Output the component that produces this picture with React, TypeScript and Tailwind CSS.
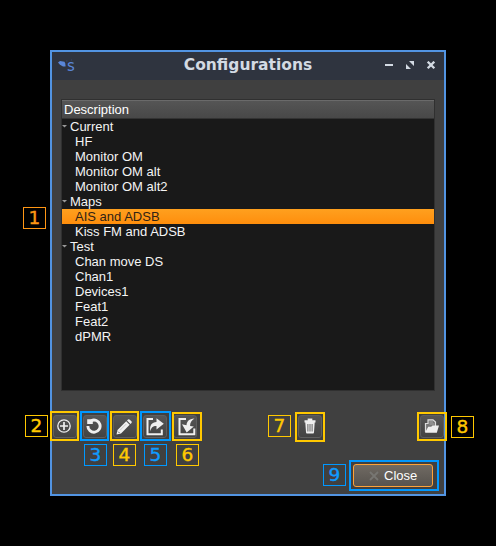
import type { ReactNode } from "react";

const groups = [
  { name: "Current", items: ["HF", "Monitor OM", "Monitor OM alt", "Monitor OM alt2"] },
  { name: "Maps", items: ["AIS and ADSB", "Kiss FM and ADSB"] },
  { name: "Test", items: ["Chan move DS", "Chan1", "Devices1", "Feat1", "Feat2", "dPMR"] },
];

const selected = "AIS and ADSB";

const tones = {
  orange: "border-[#ff9614] text-[#ff9614]",
  yellow: "border-[#ffc800] text-[#ffc800]",
  blue: "border-[#0098ff] text-[#0f9bff]",
};

type Tone = keyof typeof tones;

function Callout({ n, tone, place }: { n: number; tone: Tone; place: string }) {
  return (
    <span
      className={`absolute z-10 flex h-[22px] w-[23px] justify-center border font-['DejaVu_Sans',sans-serif] text-[18.5px] leading-[19px] [-webkit-text-stroke:0.4px] ${tones[tone]} ${place}`}
    >
      {n}
    </span>
  );
}

function ToolButton({
  label, n, tone, frame, place, children,
}: {
  label: string; n: number; tone: Tone; frame: string; place: string; children: ReactNode;
}) {
  return (
    <div className="relative h-[23px] w-6">
      <button
        aria-label={label}
        className="flex h-full w-full items-center justify-center rounded-[3px] border border-[#5f5f5f] bg-gradient-to-b from-[#565656] to-[#434343] text-[#efefef]"
      >
        {children}
      </button>
      <span className={`absolute border-2 ${tones[tone]} ${frame}`} />
      <Callout n={n} tone={tone} place={place} />
    </div>
  );
}

function TitleBar() {
  return (
    <header className="flex h-7 items-center bg-[#2f343f] pr-2 pl-1">
      <div className="flex w-16 items-center text-[#5a86d8]">
        <svg width="22" height="20" viewBox="0 0 22 20">
          <path d="M2 6.5L4 5L8.5 5.8L9.5 8V10.5L7 10.5L4 8.8Z" fill="currentColor" />
          <path d="M10 5h1.5M15 4h1M9 8h1" stroke="#35466e" />
          <text x="11" y="15" fontSize="15" fontFamily="DejaVu Sans, sans-serif" fill="currentColor">s</text>
        </svg>
      </div>
      <h1 className="flex-1 pr-2 pb-0.5 text-center font-['DejaVu_Sans',sans-serif] text-[15.5px] leading-[24px] font-bold text-[#d3dae3]">
        Configurations
      </h1>
      <div className="flex w-[52px] shrink-0 justify-between text-[#d3dae3]">
        <svg width="10" height="10" viewBox="0 0 10 10"><path d="M1 3h8v2H1z" fill="currentColor" /></svg>
        <svg width="10" height="10" viewBox="0 0 10 10"><path d="M4 0h5v5zM1 3v5h5z" fill="currentColor" /></svg>
        <svg width="10" height="10" viewBox="0 0 10 10"><path d="M1.7.7l6.6 6.6M8.3.7L1.7 7.3" stroke="currentColor" strokeWidth="2.3" /></svg>
      </div>
    </header>
  );
}

function Tree() {
  return (
    <div className="relative">
      <div className="h-[292px] border border-[#303030] bg-[#191919]">
        <div className="h-[19px] border-t border-b border-t-[#6a6a6a] border-b-[#333] bg-gradient-to-b from-[#555] to-[#484848] pl-0.5 text-[13px] leading-[18px] text-white">
          Description
        </div>
        {groups.map((g) => (
          <section key={g.name}>
            <div className="flex h-[15px] items-center text-[13px] leading-[15px]">
              <svg width="8" height="6" viewBox="0 0 8 6"><path d="M0 1h5L2.5 3.5z" fill="#999" /></svg>
              {g.name}
            </div>
            {g.items.map((item) => (
              <div
                key={item}
                className={`h-[15px] pl-[13px] text-[13px] leading-[15px] ${
                  item === selected ? "bg-gradient-to-b from-[#ffa01e] to-[#ff8e0b] text-[#302315]" : ""
                }`}
              >
                {item}
              </div>
            ))}
          </section>
        ))}
      </div>
      <Callout n={1} tone="orange" place="-left-[38px] top-[108px]" />
    </div>
  );
}

const below = "top-[29px]";

export default function App() {
  return (
    <main className="h-[546px] w-[496px] overflow-hidden bg-black p-[50px] font-['Liberation_Sans',Arial,sans-serif] text-[#f4f4f4]">
      <div className="h-[446px] w-[396px] border-2 border-[#5294e2] bg-[#404040]">
        <TitleBar />
        <div className="px-[9px] pt-[19px]">
          <Tree />
        </div>
        <div className="mt-6 flex pl-px">
          <div className="flex gap-1.5">
            <ToolButton label="New" n={2} tone="yellow" frame="-left-[3px] -top-1 h-[30px] w-[29px]" place="-left-7 top-0">
              <svg className="-mt-px -ml-0.5" width="16" height="16" viewBox="0 0 16 16" fill="none" stroke="currentColor">
                <circle cx="8" cy="8" r="6.2" strokeWidth="1.3" />
                <path d="M8 4v8M4 8h8" strokeWidth="1.7" />
              </svg>
            </ToolButton>
            <ToolButton label="Reload" n={3} tone="blue" frame="-left-[3px] -top-1 h-[30px] w-[29px]" place={`left-px ${below}`}>
              <svg className="-ml-0.5 -mt-px" width="16" height="16" viewBox="0 0 16 16">
                <path d="M5.2 2.7A6.1 6.1 0 1 1 1.9 8" fill="none" stroke="currentColor" strokeWidth="2.9" />
                <path d="M1.2 1.2L6.8 1.3V6H1.2z" fill="currentColor" />
              </svg>
            </ToolButton>
            <ToolButton label="Edit" n={4} tone="yellow" frame="-left-[3px] -top-1 h-[30px] w-[29px]" place={`left-0 ${below}`}>
              <svg className="-ml-0.5" width="18" height="18" viewBox="0 0 18 18" fill="currentColor">
                <path d="M1.5 16.5l1-4.5 8.7-8.7 3.5 3.5L6 15.5zM12 2.5l1-1q1-.6 1.8.2l1.6 1.6q.8.8.1 1.8l-1 1z" />
                <path d="M3.2 13.7l1.2 1.2" stroke="#4b4b4b" />
                <path d="M5 12.3L11.2 6.1" stroke="#aaa" strokeWidth=".6" />
              </svg>
            </ToolButton>
            <ToolButton label="Export" n={5} tone="blue" frame="-left-[3px] -top-1 h-[30px] w-[31px]" place={`left-px ${below}`}>
              <svg className="mt-px" width="20" height="20" viewBox="0 0 20 20">
                <path d="M8 2H2.5v15.3h14.3V12.5" fill="none" stroke="currentColor" strokeWidth="2" />
                <path d="M5.5 14.5C4 8.5 7 5.1 11.5 5V1.2l7.3 5.6-7.3 5.6V9.1C8 9 6 10.5 5.5 14.5z" fill="currentColor" />
              </svg>
            </ToolButton>
            <ToolButton label="Import" n={6} tone="yellow" frame="-left-px -top-[3px] h-[29px] w-[30px]" place={`left-[3px] ${below}`}>
              <svg className="mt-px ml-1 shrink-0" width="20" height="20" viewBox="0 0 20 20">
                <path d="M9 2H2.5v15.3h14.8V11.5" fill="none" stroke="currentColor" strokeWidth="2" />
                <path d="M17.5 1.5C12 1.8 9.7 4.5 9.5 8.2L5 7.3l4.7 8.1 7.1-5.8-3.7-.7c-.2-3 1.4-5.4 4.4-7.4z" fill="currentColor" />
              </svg>
            </ToolButton>
          </div>
          <div className="ml-[101px]">
            <ToolButton label="Delete" n={7} tone="yellow" frame="-left-[3px] -top-[3px] h-[30px] w-[30px]" place="-left-[30px] top-0">
              <svg className="-mt-px" width="14" height="16" viewBox="0 0 14 16" fill="currentColor">
                <path d="M1.5 2.2h3.2V.6h4.6v1.6h3.2v2.2h-11zM2.3 4.4h9.4l-.7 9.8q0 1.2-1 1.2H4q-1 0-1-1.2z" />
                <path d="M4.9 6v7.5M7 6v7.5M9.1 6v7.5" stroke="#505050" strokeWidth=".9" />
              </svg>
            </ToolButton>
          </div>
          <div className="ml-[98px]">
            <ToolButton label="Open folder" n={8} tone="yellow" frame="-left-[3px] -top-[3px] h-[29px] w-[30px]" place="left-[31px] top-px">
              <svg className="-mt-0.5" width="16" height="16" viewBox="0 0 16 16">
                <path d="M1.5 14V5.5H4V1.8h5L11.5 4v4" fill="#777" stroke="#ddd" strokeWidth="1.2" />
                <path d="M5.5 4h3.5M5.5 6h4.7" stroke="#aaa" />
                <path d="M1 14.8l3.2-6h3L8.5 7.5h6.5L12.8 14.8z" fill="currentColor" />
              </svg>
            </ToolButton>
          </div>
        </div>
        <div className="mt-[26px] flex justify-end pr-[11px]">
          <div className="relative h-[23px] w-20">
            <button className="flex h-full w-full items-center rounded-[3px] border border-[#ffa337] bg-gradient-to-b from-[#706a63] to-[#57534e] pl-[15px] text-[13px] leading-none text-white">
              <svg width="10" height="10" viewBox="0 0 10 10" className="mr-[5px]">
                <path d="M1 1l8 8M9 1L1 9" stroke="#777672" strokeWidth="1.8" />
              </svg>
              Close
            </button>
            <span className={`absolute -top-1 -left-1 h-[31px] w-[90px] border-2 ${tones.blue}`} />
            <Callout n={9} tone="blue" place="-left-[30px] top-0" />
          </div>
        </div>
      </div>
    </main>
  );
}
